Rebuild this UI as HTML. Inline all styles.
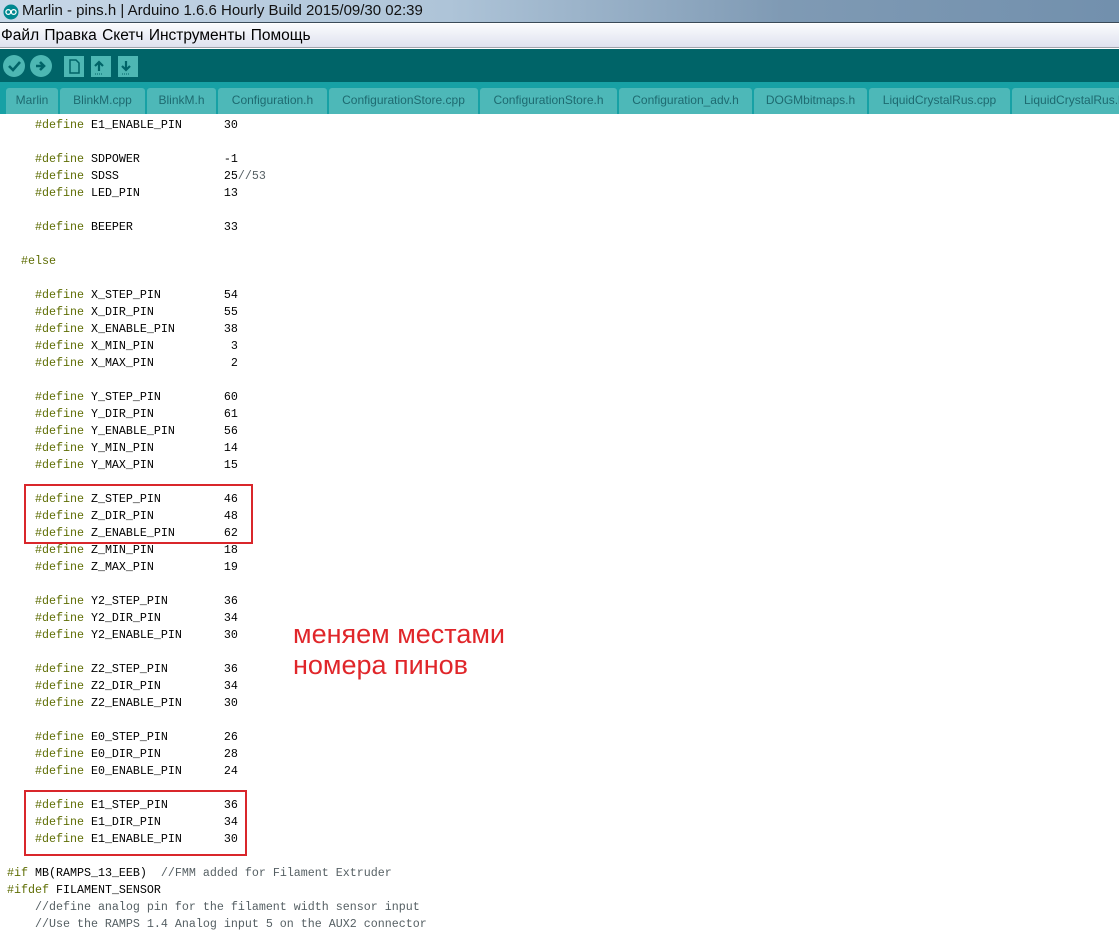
<!DOCTYPE html>
<html><head><meta charset="utf-8"><style>
*{margin:0;padding:0;box-sizing:border-box}
body{width:1119px;height:922px;overflow:hidden;background:#fff;position:relative;font-family:"Liberation Sans",sans-serif}
#title{position:absolute;left:0;top:0;width:1119px;height:23px;background:linear-gradient(90deg,#c8d8e8 0%,#aec4d8 40%,#7f9ab4 70%,#7290ad 100%);border-bottom:1px solid #3a4a58}
#title span{position:absolute;left:22px;top:2px;font-size:15px;color:#111}
#menu{position:absolute;left:0;top:24px;width:1119px;height:24px;background:linear-gradient(#fafbfd,#dfe2ef);border-bottom:1px solid #a0a4ac}
#menu span{position:absolute;left:1px;top:3px;font-size:15.5px;color:#000;word-spacing:1px}
#tb{position:absolute;left:0;top:49px;width:1119px;height:33px;background:#006468}
#tabs{position:absolute;left:0;top:82px;width:1119px;height:32px;background:#17a1a5}
.tab{position:absolute;top:6px;height:26px;background:#4db8b8;color:#1e6a70;font-size:12px;text-align:center;line-height:24px;border-radius:3px 3px 0 0}
.c{position:absolute;width:22px;height:22px;border-radius:50%;background:#4db7b3;top:55px}
.s{position:absolute;width:20px;height:21px;background:#4db7b3;top:56px}
#code{position:absolute;left:7px;top:117px;font-family:"Liberation Mono",monospace;font-size:11.67px;line-height:17px;white-space:pre;color:#000}
.k{color:#5e6d03}.m{color:#555f63}
.box{position:absolute;border:2.5px solid #d9262b}
.ann{position:absolute;left:293px;font-size:27px;color:#e0262a}
</style></head><body>
<div id="title"><svg style="position:absolute;left:3px;top:4px" width="16" height="16"><circle cx="8" cy="8" r="7.5" fill="#00878f"/><circle cx="5.3" cy="8" r="2.4" fill="none" stroke="#fff" stroke-width="1.3"/><circle cx="10.7" cy="8" r="2.4" fill="none" stroke="#fff" stroke-width="1.3"/></svg><span>Marlin - pins.h | Arduino 1.6.6 Hourly Build 2015/09/30 02:39</span></div>
<div id="menu"><span>Файл Правка Скетч Инструменты Помощь</span></div>
<div id="tb"></div>
<div class="c" style="left:3px"></div><div class="c" style="left:30px"></div>
<svg style="position:absolute;left:3px;top:55px" width="60" height="22"><path d="M6 11l4 4 7-8" stroke="#006468" stroke-width="2.6" fill="none"/><path d="M33 11h7M37 7l4 4-4 4" stroke="#006468" stroke-width="2.6" fill="none"/></svg>
<div class="s" style="left:64px"></div><div class="s" style="left:91px"></div><div class="s" style="left:118px"></div>
<svg style="position:absolute;left:64px;top:56px" width="80" height="21"><path d="M6 4h6l3 3v10H6z" fill="none" stroke="#006468" stroke-width="1.5"/><path d="M35 15V7M31 10l4-4 4 4" stroke="#006468" stroke-width="2.2" fill="none"/><path d="M31 18h8M58 18h8" stroke="#006468" stroke-dasharray="1 1"/><path d="M62 5v8M58 10l4 4 4-4" stroke="#006468" stroke-width="2.2" fill="none"/></svg>
<div id="tabs">
<div class="tab" style="left:6px;width:52px">Marlin</div>
<div class="tab" style="left:60px;width:85px">BlinkM.cpp</div>
<div class="tab" style="left:147px;width:69px">BlinkM.h</div>
<div class="tab" style="left:218px;width:109px">Configuration.h</div>
<div class="tab" style="left:329px;width:149px">ConfigurationStore.cpp</div>
<div class="tab" style="left:480px;width:137px">ConfigurationStore.h</div>
<div class="tab" style="left:619px;width:133px">Configuration_adv.h</div>
<div class="tab" style="left:754px;width:113px">DOGMbitmaps.h</div>
<div class="tab" style="left:869px;width:141px">LiquidCrystalRus.cpp</div>
<div class="tab" style="left:1012px;width:120px;text-align:left;padding-left:12px">LiquidCrystalRus.h</div>
</div>
<div id="code">    <span class="k">#define</span> E1_ENABLE_PIN      30

    <span class="k">#define</span> SDPOWER            -1
    <span class="k">#define</span> SDSS               25<span class="m">//53</span>
    <span class="k">#define</span> LED_PIN            13

    <span class="k">#define</span> BEEPER             33

  <span class="k">#else</span>

    <span class="k">#define</span> X_STEP_PIN         54
    <span class="k">#define</span> X_DIR_PIN          55
    <span class="k">#define</span> X_ENABLE_PIN       38
    <span class="k">#define</span> X_MIN_PIN           3
    <span class="k">#define</span> X_MAX_PIN           2

    <span class="k">#define</span> Y_STEP_PIN         60
    <span class="k">#define</span> Y_DIR_PIN          61
    <span class="k">#define</span> Y_ENABLE_PIN       56
    <span class="k">#define</span> Y_MIN_PIN          14
    <span class="k">#define</span> Y_MAX_PIN          15

    <span class="k">#define</span> Z_STEP_PIN         46
    <span class="k">#define</span> Z_DIR_PIN          48
    <span class="k">#define</span> Z_ENABLE_PIN       62
    <span class="k">#define</span> Z_MIN_PIN          18
    <span class="k">#define</span> Z_MAX_PIN          19

    <span class="k">#define</span> Y2_STEP_PIN        36
    <span class="k">#define</span> Y2_DIR_PIN         34
    <span class="k">#define</span> Y2_ENABLE_PIN      30

    <span class="k">#define</span> Z2_STEP_PIN        36
    <span class="k">#define</span> Z2_DIR_PIN         34
    <span class="k">#define</span> Z2_ENABLE_PIN      30

    <span class="k">#define</span> E0_STEP_PIN        26
    <span class="k">#define</span> E0_DIR_PIN         28
    <span class="k">#define</span> E0_ENABLE_PIN      24

    <span class="k">#define</span> E1_STEP_PIN        36
    <span class="k">#define</span> E1_DIR_PIN         34
    <span class="k">#define</span> E1_ENABLE_PIN      30

<span class="k">#if</span> MB(RAMPS_13_EEB)  <span class="m">//FMM added for Filament Extruder</span>
<span class="k">#ifdef</span> FILAMENT_SENSOR
    <span class="m">//define analog pin for the filament width sensor input</span>
    <span class="m">//Use the RAMPS 1.4 Analog input 5 on the AUX2 connector</span></div>
<div class="box" style="left:24px;top:484px;width:229px;height:60px"></div>
<div class="box" style="left:24px;top:790px;width:223px;height:66px"></div>
<div class="ann" style="top:619px">меняем местами</div>
<div class="ann" style="top:650px">номера пинов</div>
</body></html>
